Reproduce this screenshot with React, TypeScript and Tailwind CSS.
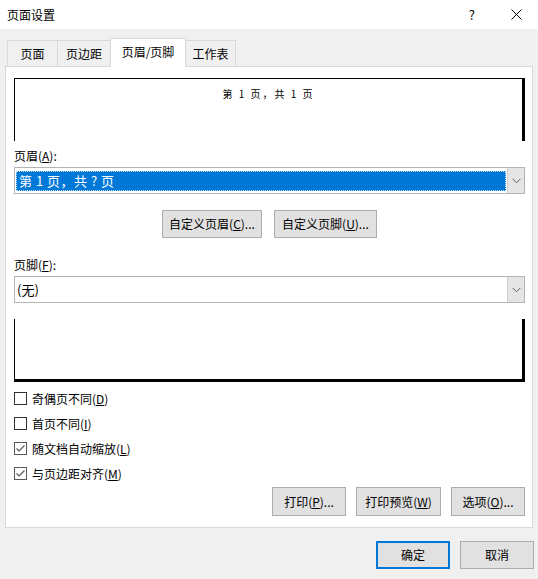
import React from "react";

const font = { fontFamily: '"Noto Sans CJK SC", "Microsoft YaHei", sans-serif' };

function Chevron() {
  return (
    <svg width="9" height="6" viewBox="0 0 9 6">
      <path d="M0.5 0.8 L4.5 4.8 L8.5 0.8" fill="none" stroke="#606060" strokeWidth="1" />
    </svg>
  );
}

function CheckBox({ checked, children }: { checked?: boolean; children: React.ReactNode }) {
  return (
    <div className="flex h-[25px] items-center">
      <div
        className={
          "flex h-[13px] w-[13px] items-center justify-center border bg-white " +
          (checked ? "border-[#5a5a5a]" : "border-[#333333]")
        }
      >
        {checked && (
          <svg width="11" height="11" viewBox="0 0 11 11">
            <path d="M1.5 5.5 L4 8 L9.5 2.5" fill="none" stroke="#5a5a5a" strokeWidth="1.2" />
          </svg>
        )}
      </div>
      <span className="ml-[5px] text-[12px] leading-[16px] text-black">{children}</span>
    </div>
  );
}

function Btn({ children, w, primary }: { children: React.ReactNode; w: string; primary?: boolean }) {
  return (
    <div
      className={
        "flex items-center justify-center bg-[#e1e1e1] text-[12px] text-black " +
        w +
        (primary ? " border-2 border-[#0078d7]" : " border border-[#adadad]")
      }
    >
      {children}
    </div>
  );
}

function Tab({ label, active, first }: { label: React.ReactNode; active?: boolean; first?: boolean }) {
  return (
    <div
      className={
        "flex items-center justify-center border-t border-r border-[#d9d9d9] text-[12px] text-black " +
        (first ? "border-l " : "") +
        (active
          ? "-ml-px mb-[-1px] h-[29px] border-l bg-white pb-[2px]"
          : "h-[26px] bg-[#f0f0f0]")
      }
    >
      {label}
    </div>
  );
}

export default function App() {
  return (
    <div className="flex h-[579px] w-[538px] flex-col overflow-hidden bg-[#f0f0f0]" style={font}>
      {/* title bar */}
      <div className="flex h-[29px] items-center bg-white">
        <span className="ml-[7px] text-[12px] text-black">页面设置</span>
        <span className="ml-auto mr-[36px] text-[13px] text-black">?</span>
        <svg width="11" height="11" viewBox="0 0 11 11" className="mr-[16px]">
          <path d="M0.5 0.5 L10.5 10.5 M10.5 0.5 L0.5 10.5" stroke="#000" strokeWidth="1" />
        </svg>
      </div>

      <div className="flex flex-1 flex-col px-[5px] pt-[9px]">
        {/* tabs */}
        <div className="relative z-10 ml-[2px] flex h-[28px] items-end">
          <div className="w-[51px]">
            <Tab first label="页面" />
          </div>
          <div className="w-[53px]">
            <Tab label="页边距" />
          </div>
          <div className="w-[75px]">
            <Tab active label="页眉/页脚" />
          </div>
          <div className="w-[50px]">
            <Tab label="工作表" />
          </div>
        </div>

        {/* panel */}
        <div className="flex h-[462px] flex-col border border-[#d9d9d9] bg-white pl-[8px] pr-[7px]">
          <div className="mt-[11px] flex h-[63px] justify-center border-l border-t border-r-[3px] border-black pt-[8px]">
            <span
              className="text-[10px] leading-[14px] tracking-[2px] text-black whitespace-pre"
              style={{ fontFamily: '"Noto Sans CJK SC", serif' }}
            >
              第 1 页，共 1 页
            </span>
          </div>

          <div className="mt-[7px] text-[12px] leading-[16px] text-black">
            页眉(<u>A</u>):
          </div>
          <div className="mt-[3px] flex h-[27px] border border-[#b4b4b4] bg-white">
            <div className="my-auto ml-[1px] mr-[1px] flex h-[20px] flex-1 items-center border border-dotted border-[#bfe0fa] bg-[#0078d7] pl-[2px] text-[13px] tracking-[0.5px] text-white whitespace-pre">
              第 1 页，共 ? 页
            </div>
            <div className="flex w-[17px] items-center justify-center border-l border-[#cfcfcf] bg-[#e5e5e5]">
              <Chevron />
            </div>
          </div>

          <div className="mt-[16px] flex justify-center gap-[12px]">
            <div className="flex h-[28px]">
              <Btn w="w-[100px]">
                自定义页眉(<u>C</u>)...
              </Btn>
            </div>
            <div className="flex h-[28px]">
              <Btn w="w-[103px]">
                自定义页脚(<u>U</u>)...
              </Btn>
            </div>
          </div>

          <div className="mt-[19px] text-[12px] leading-[16px] text-black">
            页脚(<u>F</u>):
          </div>
          <div className="mt-[3px] flex h-[27px] border border-[#b4b4b4] bg-white">
            <div className="flex flex-1 items-center pl-[2px] text-[13px] text-black">(无)</div>
            <div className="flex w-[17px] items-center justify-center border-l border-[#cfcfcf] bg-[#e5e5e5]">
              <Chevron />
            </div>
          </div>

          <div className="mt-[16px] h-[63px] border-l border-b-[3px] border-r-[3px] border-black" />

          <div className="mt-[4px] flex flex-col">
            <CheckBox>
              奇偶页不同(<u>D</u>)
            </CheckBox>
            <CheckBox>
              首页不同(<u>I</u>)
            </CheckBox>
            <CheckBox checked>
              随文档自动缩放(<u>L</u>)
            </CheckBox>
            <CheckBox checked>
              与页边距对齐(<u>M</u>)
            </CheckBox>
          </div>

          <div className="mt-[1px] flex h-[29px] justify-end gap-[10px]">
            <Btn w="w-[74px]">
              打印(<u>P</u>)...
            </Btn>
            <Btn w="w-[85px]">
              打印预览(<u>W</u>)
            </Btn>
            <Btn w="w-[74px]">
              选项(<u>O</u>)...
            </Btn>
          </div>
        </div>

        {/* dialog buttons */}
        <div className="mr-[-1px] mt-[13px] flex h-[28px] justify-end gap-[10px]">
          <Btn w="w-[74px]" primary>
            确定
          </Btn>
          <Btn w="w-[74px]">取消</Btn>
        </div>
      </div>
    </div>
  );
}
